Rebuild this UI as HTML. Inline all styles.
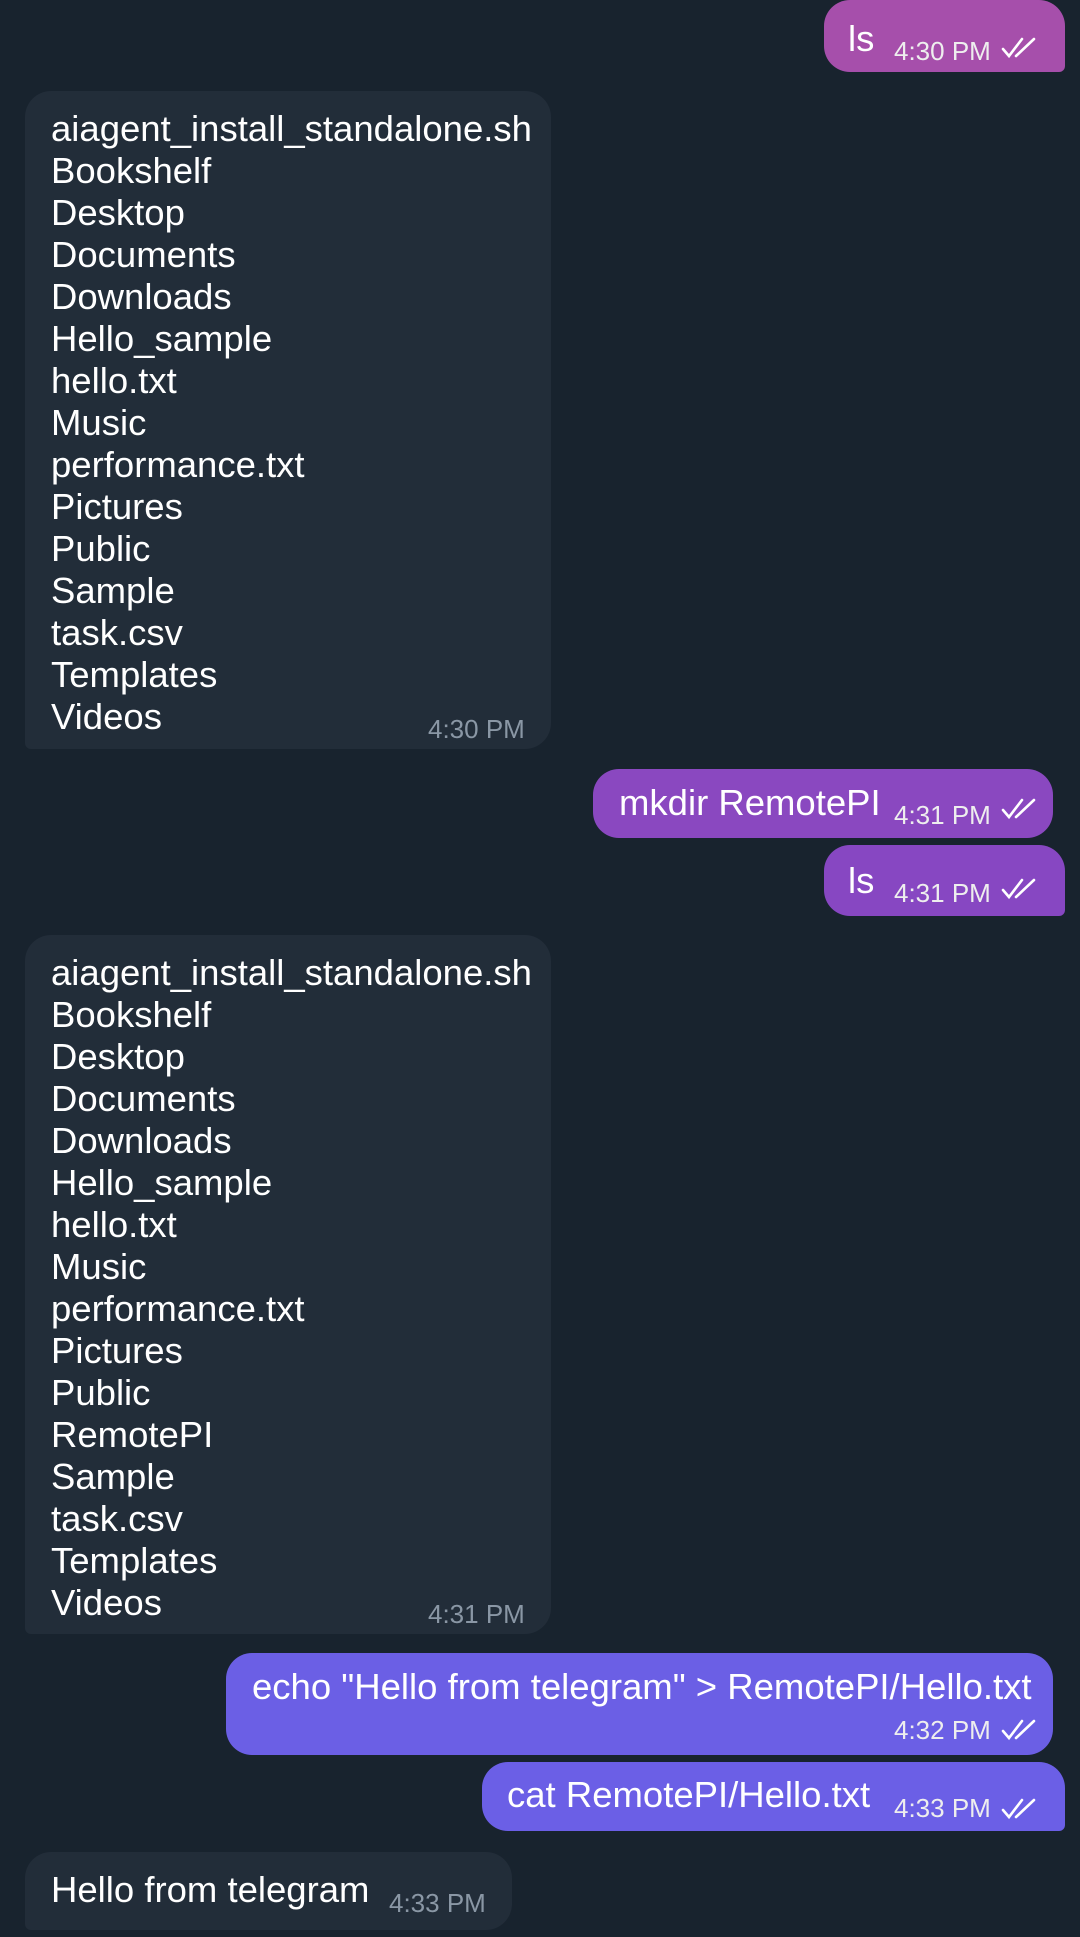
<!DOCTYPE html>
<html><head><meta charset="utf-8"><style>
body{margin:0;width:1080px;height:1937px;background:#18232e;position:relative;overflow:hidden;font-family:"Liberation Sans",sans-serif;color:#fff}
.b{position:absolute;border-radius:26px;box-sizing:border-box}
.in{background:#222d39}
.t{position:absolute;font-size:36.5px;line-height:42px;white-space:pre}
.tm{position:absolute;font-size:26px;white-space:nowrap}
.in .tm{color:#8a97a5}
.out .tm{color:#eee}
svg{position:absolute}
</style></head><body>

<div class="b out" style="left:824px;top:0;width:241px;height:72px;background:#a64fab;border-radius:26px 26px 6px 26px">
<div class="t" style="left:24px;top:18px">ls</div>
<div class="tm" style="left:70px;top:36px">4:30 PM</div>
</div>
<svg style="left:1000px;top:36px" width="40" height="24" viewBox="0 0 40 24" fill="none" stroke="#fff" stroke-width="2.6" stroke-linecap="round"><path d="M3 13l6 7L22 3M16 20L34 3"/></svg>

<div class="b in" style="left:25px;top:91px;width:526px;height:658px;border-radius:26px 26px 26px 6px">
<div class="t" style="left:26px;top:17px">aiagent_install_standalone.sh
Bookshelf
Desktop
Documents
Downloads
Hello_sample
hello.txt
Music
performance.txt
Pictures
Public
Sample
task.csv
Templates
Videos</div>
<div class="tm" style="left:403px;top:623px">4:30 PM</div>
</div>

<div class="b out" style="left:593px;top:769px;width:460px;height:69px;background:#8a48c0">
<div class="t" style="left:26px;top:13px">mkdir RemotePI</div>
<div class="tm" style="left:301px;top:31px">4:31 PM</div>
</div>
<svg style="left:1000px;top:797px" width="40" height="24" viewBox="0 0 40 24" fill="none" stroke="#fff" stroke-width="2.6" stroke-linecap="round"><path d="M3 13l6 7L22 3M16 20L34 3"/></svg>

<div class="b out" style="left:824px;top:845px;width:241px;height:71px;background:#8747c2;border-radius:26px 26px 6px 26px">
<div class="t" style="left:24px;top:15px">ls</div>
<div class="tm" style="left:70px;top:33px">4:31 PM</div>
</div>
<svg style="left:1000px;top:877px" width="40" height="24" viewBox="0 0 40 24" fill="none" stroke="#fff" stroke-width="2.6" stroke-linecap="round"><path d="M3 13l6 7L22 3M16 20L34 3"/></svg>

<div class="b in" style="left:25px;top:935px;width:526px;height:699px;border-radius:26px 26px 26px 6px">
<div class="t" style="left:26px;top:17px">aiagent_install_standalone.sh
Bookshelf
Desktop
Documents
Downloads
Hello_sample
hello.txt
Music
performance.txt
Pictures
Public
RemotePI
Sample
task.csv
Templates
Videos</div>
<div class="tm" style="left:403px;top:664px">4:31 PM</div>
</div>

<div class="b out" style="left:226px;top:1653px;width:827px;height:102px;background:#6b5fe5">
<div class="t" style="left:26px;top:13px">echo "Hello from telegram" &gt; RemotePI/Hello.txt</div>
<div class="tm" style="left:668px;top:62px">4:32 PM</div>
</div>
<svg style="left:1000px;top:1718px" width="40" height="24" viewBox="0 0 40 24" fill="none" stroke="#fff" stroke-width="2.6" stroke-linecap="round"><path d="M3 13l6 7L22 3M16 20L34 3"/></svg>

<div class="b out" style="left:482px;top:1762px;width:583px;height:69px;background:#6b5fe6;border-radius:26px 26px 6px 26px">
<div class="t" style="left:25px;top:12px">cat RemotePI/Hello.txt</div>
<div class="tm" style="left:412px;top:31px">4:33 PM</div>
</div>
<svg style="left:1000px;top:1797px" width="40" height="24" viewBox="0 0 40 24" fill="none" stroke="#fff" stroke-width="2.6" stroke-linecap="round"><path d="M3 13l6 7L22 3M16 20L34 3"/></svg>

<div class="b in" style="left:25px;top:1852px;width:487px;height:78px;border-radius:26px 26px 26px 6px">
<div class="t" style="left:26px;top:17px">Hello from telegram</div>
<div class="tm" style="left:364px;top:36px">4:33 PM</div>
</div>

</body></html>
